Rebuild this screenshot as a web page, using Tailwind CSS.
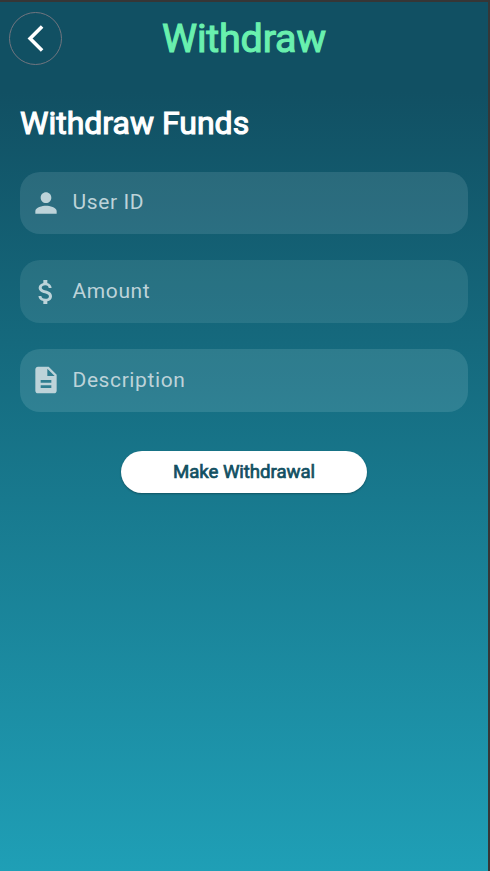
<!DOCTYPE html>
<html lang="en">
<head>
<meta charset="utf-8">
<title>Withdraw</title>
<script src="https://cdn.jsdelivr.net/npm/@tailwindcss/browser@4"></script>
</head>
<body class="h-[871px] w-[490px] overflow-hidden bg-[#363636] pt-[2px] pr-[2px] font-['Roboto',sans-serif]">
<div class="flex h-[869px] flex-col bg-[linear-gradient(to_bottom,#115063_0px,#115063_90px,#15697d_340px,#1f9fb6_869px)]">
  <header class="grid h-[73px] shrink-0 grid-cols-[72px_1fr_72px] items-center pl-[9px] pr-[9px]">
    <button class="flex size-[53px] items-center justify-center rounded-full border-[1.4px] border-[#71757f]" aria-label="Back">
      <svg class="size-[53px] shrink-0" viewBox="0 0 53 53" fill="none" stroke="#fff" stroke-width="3.6"><path d="M33.1 14.6 21.1 26.6 33.1 38.6"/></svg>
    </button>
    <h1 class="pt-px text-center text-[39.5px] leading-none font-normal tracking-[-0.2px] text-[#69f0ae] [-webkit-text-stroke:1.1px_#69f0ae]">Withdraw</h1>
  </header>
  <main class="flex flex-col px-5">
    <h2 class="mt-[28px] h-[40px] text-[32px] leading-[40px] font-normal text-white [-webkit-text-stroke:1.1px_#fff]">Withdraw Funds</h2>
    <form class="mt-[28.5px] flex flex-col gap-[26.2px]">
      <div class="flex h-[62.6px] items-center rounded-[20px] bg-[#e0f0f4]/12 pl-[10px] text-[#bdd3d9]">
        <svg class="size-8" viewBox="0 0 24 24" fill="currentColor"><path d="M12 12c2.21 0 4-1.79 4-4s-1.79-4-4-4-4 1.79-4 4 1.79 4 4 4zm0 2c-2.67 0-8 1.34-8 4v2h16v-2c0-2.66-5.33-4-8-4z"/></svg>
        <span class="ml-[10.5px] text-[21px] tracking-[0.6px]">User ID</span>
      </div>
      <div class="flex h-[62.6px] items-center rounded-[20px] bg-[#c0e0e0]/12 pl-[10px] text-[#bdd3d9]">
        <svg class="size-8" viewBox="0 0 24 24" fill="currentColor"><path d="M11.8 10.9c-2.27-.59-3-1.2-3-2.15 0-1.09 1.01-1.85 2.7-1.85 1.78 0 2.44.85 2.5 2.1h2.21c-.07-1.72-1.12-3.3-3.21-3.81V3h-3v2.16c-1.94.42-3.5 1.68-3.5 3.61 0 2.31 1.91 3.46 4.7 4.13 2.5.6 3 1.48 3 2.41 0 .69-.49 1.79-2.7 1.79-2.06 0-2.87-.92-2.98-2.1h-2.2c.12 2.19 1.76 3.42 3.68 3.83V21h3v-2.15c1.95-.37 3.5-1.5 3.5-3.55 0-2.84-2.43-3.81-4.7-4.4z"/></svg>
        <span class="ml-[10.5px] text-[21px] tracking-[0.6px]">Amount</span>
      </div>
      <div class="flex h-[62.6px] items-center rounded-[20px] bg-[#e8ffff]/12 pl-[10px] text-[#bdd3d9]">
        <svg class="size-8" viewBox="0 0 24 24" fill="currentColor"><path d="M14 2H6c-1.1 0-1.99.9-1.99 2L4 20c0 1.1.89 2 1.99 2H18c1.1 0 2-.9 2-2V8l-6-6zm2 16H8v-2h8v2zm0-4H8v-2h8v2zm-3-5V3.5L18.5 9H13z"/></svg>
        <span class="ml-[10.5px] text-[21px] tracking-[0.6px]">Description</span>
      </div>
      <button type="button" class="mt-[13.3px] h-[41.5px] w-[246px] self-center rounded-full bg-white text-[18.67px] font-normal tracking-[-0.07px] text-[#125062] shadow-[0_1px_2px_rgba(0,0,0,0.3)] [-webkit-text-stroke:0.7px_#125062]">Make Withdrawal</button>
    </form>
  </main>
</div>
</body>
</html>
